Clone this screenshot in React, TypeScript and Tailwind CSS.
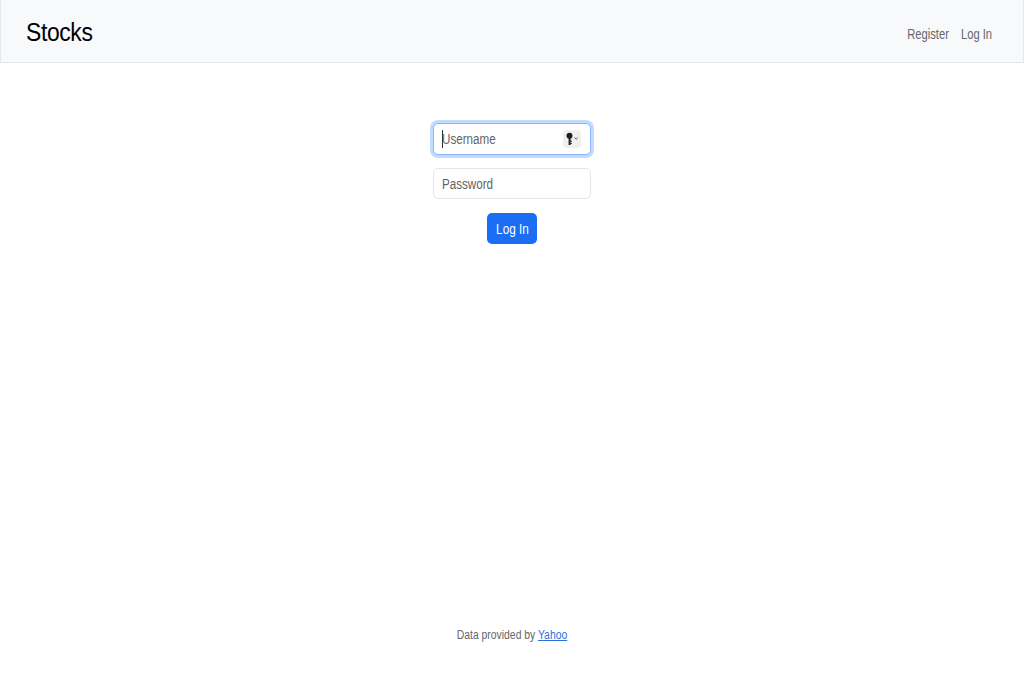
export default function App() {
  return (
    <div className="flex h-[683px] flex-col bg-white font-['Liberation_Sans',sans-serif] text-[#212529]">
      <nav className="flex h-[63px] items-center justify-between border border-t-0 border-[#e5e7ea] bg-[#f8f9fa] pl-[25px] pr-[31px]">
        <a className="mt-[3px] origin-left scale-x-[0.88] text-[26px] tracking-[-0.4px] text-black">Stocks</a>
        <ul className="mt-[7px] flex origin-right scale-x-[0.8] gap-[15px] text-[14px] text-[#63676b]">
          <li>Register</li>
          <li>Log In</li>
        </ul>
      </nav>
      <main className="flex flex-col items-center pt-[60px]">
        <div className="relative flex h-[32px] w-[158px] items-center rounded-[5px] border border-[#86b7fe] bg-white px-[8px] shadow-[0_0_0_3px_#c2dbfe]">
          <span className="origin-left scale-x-[0.83] text-[14px] text-[#5f6368]">Username</span>
          <span className="absolute left-[8px] top-[6px] h-[18px] w-px bg-[#333]" />
          <span className="absolute right-[9px] top-[6px] flex h-[18px] w-[18px] items-center justify-center rounded-[4px] bg-[#f0f0f0]">
            <svg width="14" height="14" viewBox="0 0 14 14">
              <circle cx="4.5" cy="3.8" r="3" fill="#1f1f1f" />
              <rect x="3.6" y="5" width="2" height="8" fill="#1f1f1f" />
              <rect x="5.4" y="8.5" width="1.4" height="1.2" fill="#1f1f1f" />
              <rect x="5.4" y="10.7" width="1.4" height="1.2" fill="#1f1f1f" />
              <path d="M9.5 5.5l1.7 1.7 1.7-1.7" fill="none" stroke="#555" strokeWidth="1" />
            </svg>
          </span>
        </div>
        <div className="mt-[13px] flex h-[31px] w-[158px] items-center rounded-[5px] border border-[#e3e6e9] bg-white px-[8px] pt-[1px]">
          <span className="origin-left scale-x-[0.83] text-[14px] text-[#5f6368]">Password</span>
        </div>
        <button className="mt-[14px] h-[31px] w-[50px] rounded-[5px] bg-[#1b6ef3] text-white">
          <span className="inline-block scale-x-[0.84] text-[14px]">Log In</span>
        </button>
      </main>
      <footer className="mt-[382px] scale-x-[0.865] text-center text-[12px] text-[#63686c]">
        Data provided by <a className="text-[#2a72e0] underline">Yahoo</a>
      </footer>
    </div>
  );
}
